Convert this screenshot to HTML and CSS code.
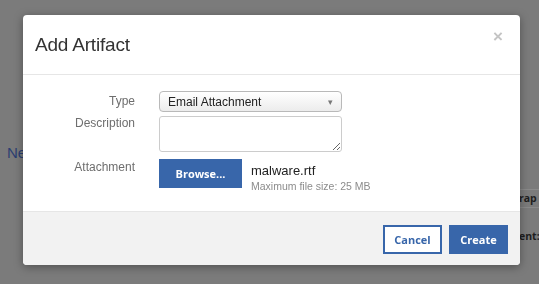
FILE: index.html
```html
<!DOCTYPE html>
<html>
  <head>
    <title>Add Artifact</title>
    <link rel="stylesheet" href="styles.css">
  </head>
  <body>
    <div class="page">
      <div class="page-left">
        <a class="page-link">Ne</a>
      </div>
      <div class="page-right">
        <div class="page-cell page-head">rap</div>
        <div class="page-cell page-field">ent:</div>
      </div>
    </div>

    <div class="backdrop">
      <div class="modal">
        <div class="modal-header">
          <h2 class="modal-title">Add Artifact</h2>
          <span class="modal-close">&times;</span>
        </div>

        <div class="modal-body">
          <div class="form-row">
            <label class="form-label label-type">Type</label>
            <div class="select">
              <span>Email Attachment</span>
              <span class="select-arrow">&#9662;</span>
            </div>
          </div>
          <div class="form-row">
            <label class="form-label label-desc">Description</label>
            <textarea class="textarea"></textarea>
          </div>
          <div class="form-row">
            <label class="form-label label-attach">Attachment</label>
            <button class="btn btn-primary btn-browse">Browse...</button>
            <div class="file-info">
              <div class="file-name">malware.rtf</div>
              <div class="file-hint">Maximum file size: 25 MB</div>
            </div>
          </div>
        </div>

        <div class="modal-footer">
          <button class="btn btn-outline">Cancel</button>
          <button class="btn btn-primary">Create</button>
        </div>
      </div>
    </div>
  </body>
</html>
```

FILE: styles.css
```css
body {
  margin: 0;
  width: 539px;
  height: 284px;
  overflow: hidden;
  font-family: "Liberation Sans", Arial, sans-serif;
  background-color: #7b7b7b;
}
.page {
  display: flex;
  justify-content: space-between;
  height: 284px;
}
.page-left {
  padding: 144px 0 0 7px;
}
.page-link {
  font-size: 15px;
  color: #2c3f72;
}
.page-right {
  width: 20px;
  padding-top: 189px;
}
.page-cell {
  font-family: "Open Sans", sans-serif;
  font-weight: 700;
  font-size: 10.5px;
  color: #1e1e1e;
  white-space: nowrap;
}
.page-head {
  height: 17px;
  line-height: 17px;
  border-top: 1px solid #8a8a8a;
  border-bottom: 1px solid #8a8a8a;
}
.page-field {
  padding-top: 21px;
}

.backdrop {
  position: fixed;
  top: 0;
  left: 0;
  right: 0;
  bottom: 0;
}
.modal {
  width: 497px;
  margin: 15px 0 0 23px;
  background-color: #ffffff;
  border-radius: 4px;
  box-shadow: 0 2px 10px rgba(0, 0, 0, 0.35);
  overflow: hidden;
}
.modal-header {
  height: 59px;
  padding: 0 12px;
  display: flex;
  align-items: center;
  justify-content: space-between;
  border-bottom: 1px solid #e6e6e6;
}
.modal-title {
  margin: 0;
  font-size: 19px;
  font-weight: 400;
  color: #333333;
  letter-spacing: -0.2px;
}
.modal-close {
  align-self: flex-start;
  margin-top: 12px;
  margin-right: 5px;
  font-size: 17px;
  font-weight: 700;
  color: #c4c4c4;
}
.modal-body {
  padding: 16px 0 18px;
  display: flex;
  flex-direction: column;
  gap: 4px;
}
.form-row {
  display: flex;
  align-items: flex-start;
}
.form-row + .form-row + .form-row {
  margin-top: 3px;
}
.form-label {
  width: 112px;
  margin-right: 24px;
  text-align: right;
  font-size: 12px;
  color: #6e6e6e;
}
.label-type {
  line-height: 21px;
}
.label-desc {
  line-height: 14px;
}
.label-attach {
  line-height: 16px;
}
.select {
  box-sizing: border-box;
  width: 183px;
  height: 21px;
  padding: 0 8px;
  display: flex;
  align-items: center;
  justify-content: space-between;
  border: 1px solid #b9b9b9;
  border-radius: 4px;
  background: linear-gradient(#ffffff, #ececec);
  font-size: 12px;
  color: #222222;
}
.select-arrow {
  font-size: 9px;
  color: #777777;
}
.textarea {
  box-sizing: border-box;
  width: 183px;
  height: 36px;
  margin: 0;
  border: 1px solid #cccccc;
  border-radius: 3px;
  font-family: inherit;
}
.btn {
  box-sizing: border-box;
  height: 29px;
  width: 59px;
  padding: 0;
  font-family: "Open Sans", sans-serif;
  font-weight: 700;
  font-size: 11px;
  border-radius: 0;
  cursor: pointer;
}
.btn-primary {
  background-color: #3866aa;
  border: 1px solid #3866aa;
  color: #ffffff;
}
.btn-outline {
  background-color: #ffffff;
  border: 2px solid #3866aa;
  color: #3866aa;
}
.btn-browse {
  width: 83px;
}
.file-info {
  margin: 4px 0 0 9px;
}
.file-name {
  font-size: 13px;
  line-height: 16px;
  color: #222222;
}
.file-hint {
  font-size: 10.5px;
  line-height: 14px;
  color: #8c8c8c;
}
.modal-footer {
  height: 54px;
  box-sizing: border-box;
  padding: 13px 12px 0;
  display: flex;
  justify-content: flex-end;
  gap: 7px;
  background-color: #f2f2f2;
  border-top: 1px solid #e6e6e6;
}
```
